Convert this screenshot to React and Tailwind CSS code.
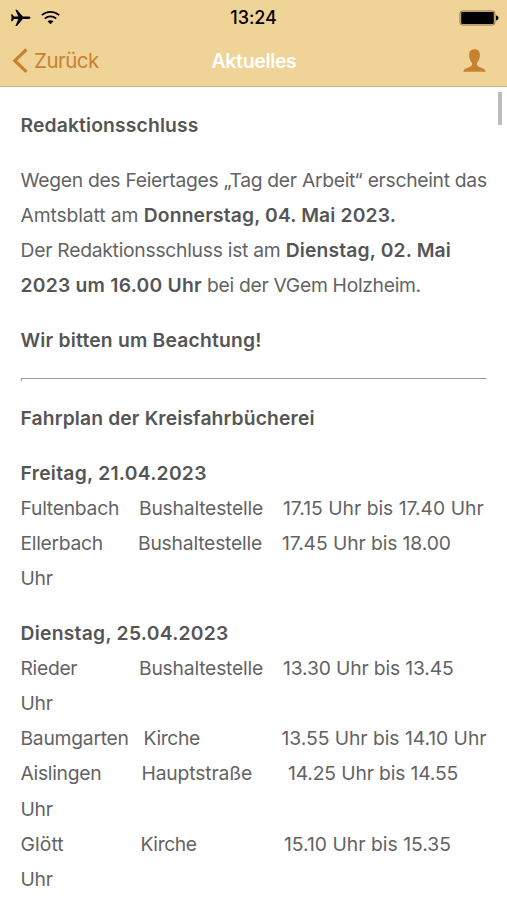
const fridayRows = [
  [
    { text: "Fultenbach", className: "w-[118.5px] tracking-[-0.25px]" },
    { text: "Bushaltestelle", className: "w-[144px] tracking-[-0.2px]" },
    { text: "17.15 Uhr bis 17.40 Uhr", className: "tracking-[0px]" },
  ],
  [
    { text: "Ellerbach", className: "w-[117.5px] tracking-[-0.3px]" },
    { text: "Bushaltestelle", className: "w-[144px] tracking-[-0.2px]" },
    { text: "17.45 Uhr bis 18.00", className: "tracking-[-0.1px]" },
  ],
  [{ text: "Uhr", className: "tracking-[-0.3px]" }],
];

const tuesdayRows = [
  [
    { text: "Rieder", className: "w-[118.5px] tracking-[-0.3px]" },
    { text: "Bushaltestelle", className: "w-[144px] tracking-[-0.2px]" },
    { text: "13.30 Uhr bis 13.45", className: "tracking-[-0.15px]" },
  ],
  [{ text: "Uhr", className: "tracking-[-0.3px]" }],
  [
    { text: "Baumgarten", className: "w-[123.5px] tracking-[-0.25px]" },
    { text: "Kirche", className: "w-[138.5px] tracking-[-0.35px]" },
    { text: "13.55 Uhr bis 14.10 Uhr", className: "tracking-[-0.04px]" },
  ],
  [
    { text: "Aislingen", className: "w-[121px] tracking-[-0.3px]" },
    { text: "Hauptstraße", className: "w-[146.5px] tracking-[-0.15px]" },
    { text: "14.25 Uhr bis 14.55", className: "tracking-[-0.15px]" },
  ],
  [{ text: "Uhr", className: "tracking-[-0.3px]" }],
  [
    { text: "Glött", className: "w-[120px] tracking-[0.1px]" },
    { text: "Kirche", className: "w-[143.5px] tracking-[-0.4px]" },
    { text: "15.10 Uhr bis 15.35", className: "tracking-[0.02px]" },
  ],
  [{ text: "Uhr", className: "tracking-[-0.3px]" }],
];

function StatusBar() {
  return (
    <div className="flex h-[35px] items-center justify-between pr-[8px] pl-[10px] text-black">
      <div className="flex w-[60px] items-center gap-[10px]">
        <svg width="21" height="18" viewBox="0 0 21 18" fill="currentColor">
          <path d="M20.500 8.700c0-.8-.9-1.200-2.200-1.200h-5.500L7 .8H5.400L8.300 7.500H4L2.200 5.200H1.100L1.600 8.700l-.5 3.500h1.100L4 9.900h4.300L5.400 17H7L12.800 9.900h5.500c1.300 0 2.200-.4 2.200-1.200z" />
        </svg>
        <svg width="19" height="15" viewBox="0 0 19 15" fill="none" stroke="currentColor">
          <path d="M.8 5.200c5-4.500 12.400-4.500 17.400 0" strokeWidth="1.800" />
          <path d="M3.800 8.600c3.300-3 8.100-3 11.400 0" strokeWidth="1.800" />
          <path d="M6.500 11.300c1.800-1.500 4.200-1.500 6 0l-3 3z" fill="currentColor" stroke="none" />
        </svg>
      </div>
      <span className="pr-[2px] text-[18px] font-medium tracking-[-0.1px]">13:24</span>
      <div className="flex w-[60px] justify-end">
        <svg width="40" height="16" viewBox="0 0 40 16">
          <rect x="1" y="1" width="35" height="14" rx="2.500" fill="none" stroke="#8c6a48" />
          <rect x="2.200" y="2" width="32.600" height="12" rx="1" fill="#000" />
          <path d="M37 5.500c1.500 0 2.500 1 2.500 2.500s-1 2.500-2.500 2.500z" fill="#000" />
        </svg>
      </div>
    </div>
  );
}

function NavBar() {
  return (
    <div className="flex h-[51px] items-center justify-between pr-[21px] pl-[12px]">
      <button className="flex w-[100px] items-center gap-[6px] text-[#c7812f]">
        <svg width="16" height="26" viewBox="0 0 16 26" fill="none" stroke="currentColor" strokeWidth="3.200">
          <path d="M14.500 1.500L2.800 12.700l11.700 11.200" />
        </svg>
        <span className="text-[20.5px] leading-[24px] tracking-[-0.5px]">Zurück</span>
      </button>
      <h1 className="pl-[1px] text-[19.5px] leading-[24px] font-semibold tracking-[-0.35px] text-white">
        Aktuelles
      </h1>
      <div className="flex w-[91px] justify-end text-[#c7812f]">
        <svg width="23" height="23" viewBox="0 0 23 23" fill="currentColor">
          <path d="M11.500.3C8 .3 6.100 2.400 6.100 5.700c0 3.200.9 5.800 2.700 7.700.4 1.600.3 3-.8 3.800C6 18.800.7 18.800.3 22.700h22.400c-.4-3.900-5.700-3.900-7.700-5.500-1.100-.8-1.200-2.200-.8-3.800 1.800-1.900 2.700-4.500 2.700-7.700 0-3.300-1.900-5.400-5.400-5.400z" />
        </svg>
      </div>
    </div>
  );
}

function Timetable({ title, rows }) {
  return (
    <section className="mb-[20px]">
      <h2 className="font-semibold tracking-[0.27px] text-[#555555]">{title}</h2>
      {rows.map((row, index) => (
        <div key={index} className="flex whitespace-nowrap">
          {row.map((cell) => (
            <span key={cell.text} className={cell.className}>
              {cell.text}
            </span>
          ))}
        </div>
      ))}
    </section>
  );
}

export default function App() {
  return (
    <div className="relative h-[900px] w-[507px] overflow-hidden bg-white font-['Inter',sans-serif]">
      <header className="h-[87px] border-b border-[#cdb582] bg-[#f0d497]">
        <StatusBar />
        <NavBar />
      </header>

      <div className="absolute top-[92px] right-[5px] h-[33px] w-[4px] bg-[#bcbcbc]" />

      <main className="px-[20.5px] pt-[21px] text-[19.3px] leading-[35.1px] text-[#636363]">
        <h2 className="mb-[20px] font-semibold tracking-[0.15px] text-[#555555]">Redaktionsschluss</h2>
        <div className="mb-[20px] whitespace-nowrap">
          <p className="tracking-[-0.29px]">Wegen des Feiertages „Tag der Arbeit“ erscheint das</p>
          <p className="tracking-[-0.1px]">
            Amtsblatt am{" "}
            <b className="font-semibold tracking-[0.15px] text-[#555555]">Donnerstag, 04. Mai 2023.</b>
          </p>
          <p className="tracking-[-0.26px]">
            Der Redaktionsschluss ist am{" "}
            <b className="font-semibold tracking-[0.16px] text-[#555555]">Dienstag, 02. Mai</b>
          </p>
          <p className="tracking-[-0.3px]">
            <b className="font-semibold tracking-[0.24px] text-[#555555]">2023 um 16.00 Uhr</b> bei der
            VGem Holzheim.
          </p>
        </div>
        <p className="font-semibold tracking-[0.2px] text-[#555555]">Wir bitten um Beachtung!</p>
        <hr className="mt-[19px] mb-[20px] h-[3px] border border-b-0 border-t-[#9a9a9a] border-r-[#eeeeee] border-l-[#9a9a9a]" />
        <h2 className="mb-[20px] font-semibold tracking-[0.13px] text-[#555555]">
          Fahrplan der Kreisfahrbücherei
        </h2>
        <Timetable title="Freitag, 21.04.2023" rows={fridayRows} />
        <Timetable title="Dienstag, 25.04.2023" rows={tuesdayRows} />
      </main>
    </div>
  );
}
